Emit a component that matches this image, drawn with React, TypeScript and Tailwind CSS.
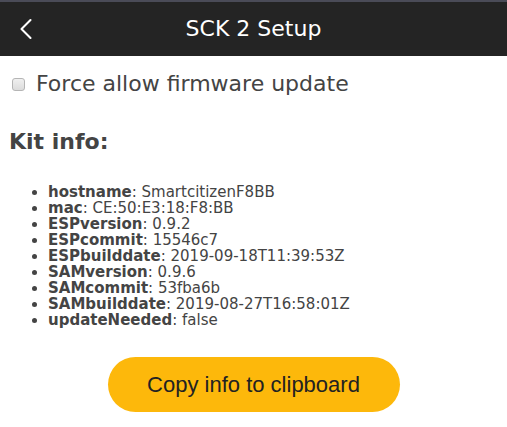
import { ChevronLeft } from 'lucide-react';

const info: [string, string][] = [
  ['hostname', 'SmartcitizenF8BB'],
  ['mac', 'CE:50:E3:18:F8:BB'],
  ['ESPversion', '0.9.2'],
  ['ESPcommit', '15546c7'],
  ['ESPbuilddate', '2019-09-18T11:39:53Z'],
  ['SAMversion', '0.9.6'],
  ['SAMcommit', '53fba6b'],
  ['SAMbuilddate', '2019-08-27T16:58:01Z'],
  ['updateNeeded', 'false'],
];

export default function App() {
  return (
    <div className="h-[427px] w-[507px] overflow-hidden bg-white font-['DejaVu_Sans',sans-serif] text-[#444]">
      <header className="relative flex h-[56px] items-center justify-center border-t-2 border-[#4a4b57] bg-[#242424] text-white">
        <button aria-label="Back" className="absolute left-[8px] top-[9px] text-white">
          <ChevronLeft size={36} strokeWidth={1.4} aria-hidden="true" />
        </button>
        <h1 className="text-[22px] leading-none">SCK 2 Setup</h1>
      </header>

      <label className="mt-[16px] flex items-center gap-[11px] pl-[12px]">
        <input
          type="checkbox"
          className="h-[13px] w-[13px] appearance-none rounded-[3px] border border-[#b5b5b5] bg-gradient-to-b from-[#f0f0f0] to-[#dcdcdc]"
        />
        <span className="text-[22px] leading-[24px]">Force allow firmware update</span>
      </label>

      <h3 className="mt-[33px] pl-[9px] text-[22px] font-bold leading-[26px]">Kit info:</h3>

      <ul className="mt-[29px] list-disc pl-[48px] text-[15px] leading-[16px]">
        {info.map(([k, v]) => (
          <li key={k}>
            <b>{k}</b>: {v}
          </li>
        ))}
      </ul>

      <div className="mt-[29px] flex justify-center">
        <button className="h-[55px] w-[292px] rounded-full bg-[#fdb80b] font-['Liberation_Sans',sans-serif] text-[22px] text-[#222]">
          Copy info to clipboard
        </button>
      </div>
    </div>
  );
}
